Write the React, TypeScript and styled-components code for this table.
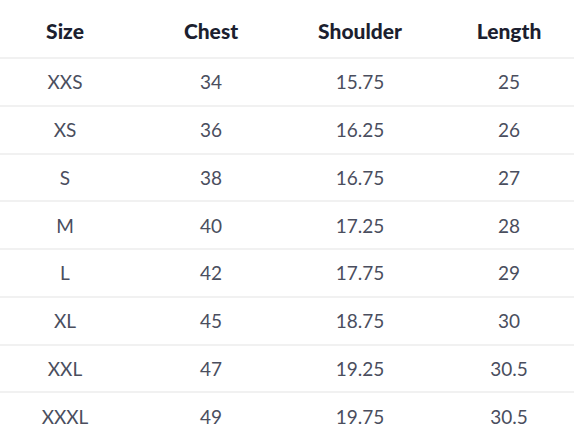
import { ReactElement } from 'react'
import styled, { createGlobalStyle } from 'styled-components'

const HEADING = '#1c1f30'
const BODY_TEXT = '#4a4e5e'
const RULE = '#f1f1f1'

const GlobalStyle = createGlobalStyle`
  html, body {
    margin: 0;
    padding: 0;
    background: #ffffff;
    overflow: hidden;
  }
  body {
    font-family: 'Source Sans Pro', Lato, 'Open Sans', sans-serif;
  }
`

const Table = styled.table`
  width: 590px;
  border-collapse: collapse;
  table-layout: fixed;
`

const Col = styled.col<{ width: number }>`
  width: ${({ width }) => width}px;
`

const HeadCell = styled.th`
  height: 53px;
  padding: 4px 0 0;
  text-align: center;
  font-size: 21px;
  font-weight: 900;
  color: ${HEADING};
  border-bottom: 2px solid ${RULE};
`

const Row = styled.tr<{ last?: boolean }>`
  border-bottom: ${({ last }) => (last ? 'none' : `2px solid ${RULE}`)};
`

const Cell = styled.td`
  height: 45.75px;
  padding: 0;
  text-align: center;
  font-size: 19px;
  font-weight: 400;
  color: ${BODY_TEXT};
`

type SizeRow = {
  size: string
  chest: string
  shoulder: string
  length: string
}

const rows: SizeRow[] = [
  { size: 'XXS', chest: '34', shoulder: '15.75', length: '25' },
  { size: 'XS', chest: '36', shoulder: '16.25', length: '26' },
  { size: 'S', chest: '38', shoulder: '16.75', length: '27' },
  { size: 'M', chest: '40', shoulder: '17.25', length: '28' },
  { size: 'L', chest: '42', shoulder: '17.75', length: '29' },
  { size: 'XL', chest: '45', shoulder: '18.75', length: '30' },
  { size: 'XXL', chest: '47', shoulder: '19.25', length: '30.5' },
  { size: 'XXXL', chest: '49', shoulder: '19.75', length: '30.5' },
]

const App = (): ReactElement => (
  <>
    <GlobalStyle />
    <Table>
      <colgroup>
        <Col width={130} />
        <Col width={162} />
        <Col width={136} />
        <Col width={162} />
      </colgroup>
      <thead>
        <tr>
          <HeadCell>Size</HeadCell>
          <HeadCell>Chest</HeadCell>
          <HeadCell>Shoulder</HeadCell>
          <HeadCell>Length</HeadCell>
        </tr>
      </thead>
      <tbody>
        {rows.map((row, i) => (
          <Row key={row.size} last={i === rows.length - 1}>
            <Cell>{row.size}</Cell>
            <Cell>{row.chest}</Cell>
            <Cell>{row.shoulder}</Cell>
            <Cell>{row.length}</Cell>
          </Row>
        ))}
      </tbody>
    </Table>
  </>
)

export default App
